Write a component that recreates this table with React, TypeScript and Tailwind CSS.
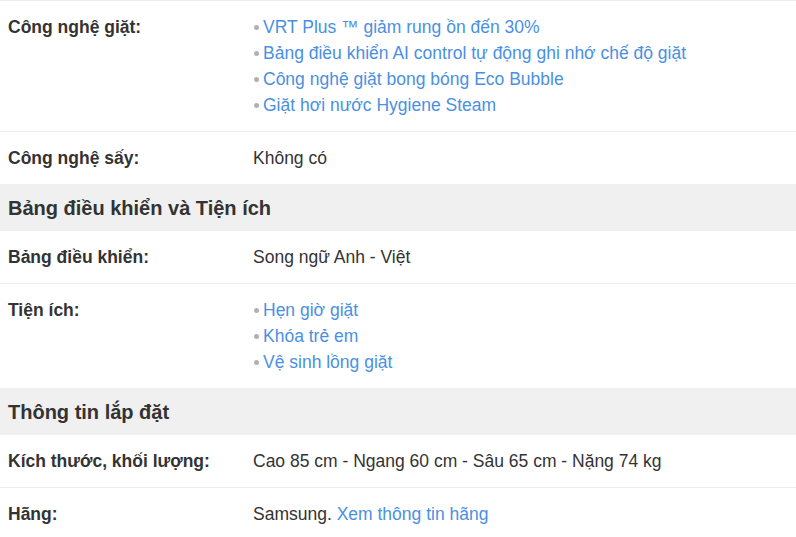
import React from 'react';

type Row = {
  label: string;
  value?: React.ReactNode;
  items?: string[];
};

type Group = {
  title?: string;
  rows: Row[];
};

const groups: Group[] = [
  {
    rows: [
      {
        label: 'Công nghệ giặt:',
        items: [
          'VRT Plus ™ giảm rung ồn đến 30%',
          'Bảng điều khiển AI control tự động ghi nhớ chế độ giặt',
          'Công nghệ giặt bong bóng Eco Bubble',
          'Giặt hơi nước Hygiene Steam',
        ],
      },
      { label: 'Công nghệ sấy:', value: 'Không có' },
    ],
  },
  {
    title: 'Bảng điều khiển và Tiện ích',
    rows: [
      { label: 'Bảng điều khiển:', value: 'Song ngữ Anh - Việt' },
      {
        label: 'Tiện ích:',
        items: ['Hẹn giờ giặt', 'Khóa trẻ em', 'Vệ sinh lồng giặt'],
      },
    ],
  },
  {
    title: 'Thông tin lắp đặt',
    rows: [
      { label: 'Kích thước, khối lượng:', value: 'Cao 85 cm - Ngang 60 cm - Sâu 65 cm - Nặng 74 kg' },
      {
        label: 'Hãng:',
        value: (
          <>
            Samsung. <a href="#" className="text-[#4a90e2]">Xem thông tin hãng</a>
          </>
        ),
      },
    ],
  },
];

function SpecRow({ row, last }: { row: Row; last: boolean }) {
  return (
    <div className={`flex py-[13px] ${last ? '' : 'border-b border-[#eeeeee]'}`}>
      <div className="w-[253px] shrink-0 pl-2 font-bold text-[#333333]">{row.label}</div>
      <div className="flex-1 text-[#333333]">
        {row.items ? (
          <ul>
            {row.items.map((item) => (
              <li key={item} className="flex items-center text-[#4a90e2]">
                {/* grey dot bullet */}
                <span className="ml-[1px] mr-[4px] h-[5px] w-[5px] shrink-0 rounded-full bg-[#b0b0b0]" />
                {item}
              </li>
            ))}
          </ul>
        ) : (
          row.value
        )}
      </div>
    </div>
  );
}

export default function App() {
  return (
    <div className="w-[796px] h-[537px] overflow-hidden bg-white font-['Liberation_Sans',Arial,sans-serif] text-[17.5px] leading-[26px]">
      <div className="border-t border-[#eeeeee]">
        {groups.map((group, gi) => (
          <div key={gi}>
            {group.title && (
              <div className="bg-[#f0f0f0] px-2 py-[10.5px] text-[20px] font-bold text-[#333333]">
                {group.title}
              </div>
            )}
            {group.rows.map((row, ri) => (
              <SpecRow key={row.label} row={row} last={ri === group.rows.length - 1 && gi < groups.length - 1} />
            ))}
          </div>
        ))}
      </div>
    </div>
  );
}
